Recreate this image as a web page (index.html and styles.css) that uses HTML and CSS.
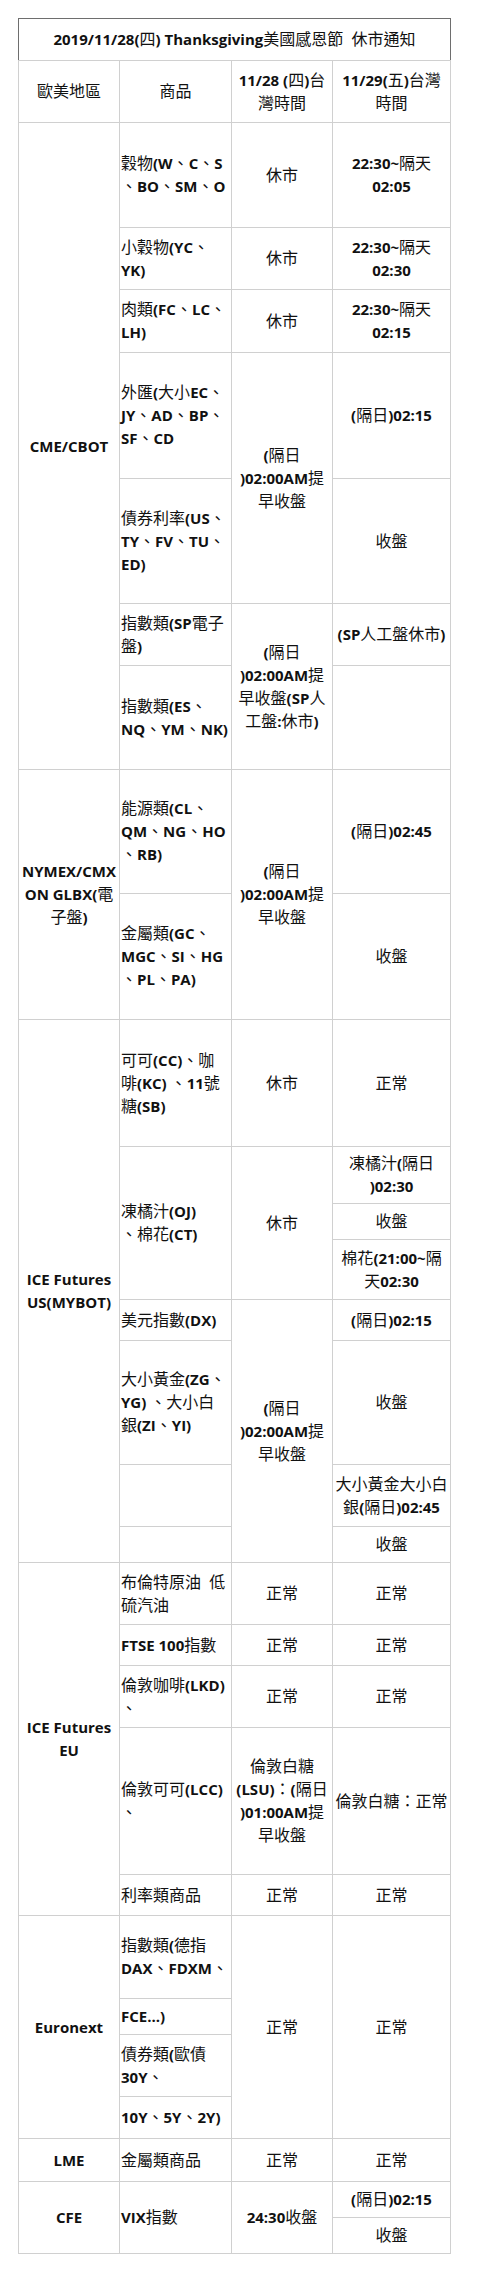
FILE: index.html
```html
<!DOCTYPE html>
<html lang="zh-Hant">
<head>
<meta charset="utf-8">
<title>2019/11/28 Thanksgiving 休市通知</title>
<link rel="stylesheet" href="styles.css">
</head>
<body>
<div class="page">
<table class="notice">
<colgroup><col class="c1"><col class="c2"><col class="c3"><col class="c4"></colgroup>
<tr class="h42"><td colspan="4" class="title"><span class="l">2019/11/28(</span>四<span class="l">) Thanksgiving</span>美國感恩節&nbsp;&nbsp;休市通知</td></tr>
<tr class="h62"><td>歐美地區</td><td>商品</td><td><span class="l">11/28 (</span>四<span class="l">)</span>台<br>灣時間</td><td><span class="l">11/29(</span>五<span class="l">)</span>台灣<br>時間</td></tr>

<tr class="h105"><td rowspan="7" class="l">CME/CBOT</td><td class="prod">穀物<span class="l">(W</span>、<span class="l">C</span>、<span class="l">S</span><br>、<span class="l">BO</span>、<span class="l">SM</span>、<span class="l">O</span></td><td>休市</td><td><span class="l">22:30~</span>隔天<br><span class="l">02:05</span></td></tr>
<tr class="h62"><td class="prod">小穀物<span class="l">(YC</span>、<br><span class="l">YK)</span></td><td>休市</td><td><span class="l">22:30~</span>隔天<br><span class="l">02:30</span></td></tr>
<tr class="h63"><td class="prod">肉類<span class="l">(FC</span>、<span class="l">LC</span>、<br><span class="l">LH)</span></td><td>休市</td><td><span class="l">22:30~</span>隔天<br><span class="l">02:15</span></td></tr>
<tr class="h126"><td class="prod">外匯<span class="l">(</span>大小<span class="l">EC</span>、<br><span class="l">JY</span>、<span class="l">AD</span>、<span class="l">BP</span>、<br><span class="l">SF</span>、<span class="l">CD</span></td><td rowspan="2"><span class="l">(</span>隔日<br><span class="l">)02:00AM</span>提<br>早收盤</td><td><span class="l">(</span>隔日<span class="l">)02:15</span></td></tr>
<tr class="h125"><td class="prod">債券利率<span class="l">(US</span>、<br><span class="l">TY</span>、<span class="l">FV</span>、<span class="l">TU</span>、<br><span class="l">ED)</span></td><td>收盤</td></tr>
<tr class="h62"><td class="prod">指數類<span class="l">(SP</span>電子<br>盤<span class="l">)</span></td><td rowspan="2"><span class="l">(</span>隔日<br><span class="l">)02:00AM</span>提<br>早收盤<span class="l">(SP</span>人<br>工盤<span class="l">:</span>休市<span class="l">)</span></td><td><span class="l">(SP</span>人工盤休市<span class="l">)</span></td></tr>
<tr class="h104"><td class="prod">指數類<span class="l">(ES</span>、<br><span class="l">NQ</span>、<span class="l">YM</span>、<span class="l">NK)</span></td><td></td></tr>

<tr class="h124"><td rowspan="2"><span class="l">NYMEX/CMX<br>ON GLBX(</span>電<br>子盤<span class="l">)</span></td><td class="prod">能源類<span class="l">(CL</span>、<br><span class="l">QM</span>、<span class="l">NG</span>、<span class="l">HO</span><br>、<span class="l">RB)</span></td><td rowspan="2"><span class="l">(</span>隔日<br><span class="l">)02:00AM</span>提<br>早收盤</td><td><span class="l">(</span>隔日<span class="l">)02:45</span></td></tr>
<tr class="h126"><td class="prod">金屬類<span class="l">(GC</span>、<br><span class="l">MGC</span>、<span class="l">SI</span>、<span class="l">HG</span><br>、<span class="l">PL</span>、<span class="l">PA)</span></td><td>收盤</td></tr>

<tr class="h127"><td rowspan="8" class="l">ICE Futures<br>US(MYBOT)</td><td class="prod">可可<span class="l">(CC)</span>、咖<br>啡<span class="l">(KC) </span>、<span class="l">11</span>號<br>糖<span class="l">(SB)</span></td><td>休市</td><td>正常</td></tr>
<tr class="h57"><td rowspan="3" class="prod">凍橘汁<span class="l">(OJ)</span><br>、棉花<span class="l">(CT)</span></td><td rowspan="3">休市</td><td>凍橘汁<span class="l">(</span>隔日<br><span class="l">)02:30</span></td></tr>
<tr class="h36"><td>收盤</td></tr>
<tr class="h60"><td>棉花<span class="l">(21:00~</span>隔<br>天<span class="l">02:30</span></td></tr>
<tr class="h41"><td class="prod">美元指數<span class="l">(DX)</span></td><td rowspan="4"><span class="l">(</span>隔日<br><span class="l">)02:00AM</span>提<br>早收盤</td><td><span class="l">(</span>隔日<span class="l">)02:15</span></td></tr>
<tr class="h124"><td class="prod">大小黃金<span class="l">(ZG</span>、<br><span class="l">YG) </span>、大小白<br>銀<span class="l">(ZI</span>、<span class="l">YI)</span></td><td>收盤</td></tr>
<tr class="h62"><td class="prod"></td><td>大小黃金大小白<br>銀<span class="l">(</span>隔日<span class="l">)02:45</span></td></tr>
<tr class="h36"><td class="prod"></td><td>收盤</td></tr>

<tr class="h62"><td rowspan="5" class="l">ICE Futures<br>EU</td><td class="prod">布倫特原油&nbsp;&nbsp;低<br>硫汽油</td><td>正常</td><td>正常</td></tr>
<tr class="h41"><td class="prod"><span class="l">FTSE 100</span>指數</td><td>正常</td><td>正常</td></tr>
<tr class="h62"><td class="prod">倫敦咖啡<span class="l">(LKD)</span><br>、</td><td>正常</td><td>正常</td></tr>
<tr class="h147"><td class="prod">倫敦可可<span class="l">(LCC)</span><br>、</td><td>倫敦白糖<br><span class="l">(LSU)</span>：<span class="l">(</span>隔日<br><span class="l">)01:00AM</span>提<br>早收盤</td><td>倫敦白糖：正常</td></tr>
<tr class="h41"><td class="prod">利率類商品</td><td>正常</td><td>正常</td></tr>

<tr class="h83"><td rowspan="4" class="l">Euronext</td><td class="prod">指數類<span class="l">(</span>德指<br><span class="l">DAX</span>、<span class="l">FDXM</span>、</td><td rowspan="4">正常</td><td rowspan="4">正常</td></tr>
<tr class="h36"><td class="prod"><span class="l">FCE...)</span></td></tr>
<tr class="h62"><td class="prod">債券類<span class="l">(</span>歐債<br><span class="l">30Y</span>、</td></tr>
<tr class="h42"><td class="prod"><span class="l">10Y</span>、<span class="l">5Y</span>、<span class="l">2Y)</span></td></tr>

<tr class="h43"><td class="l">LME</td><td class="prod">金屬類商品</td><td>正常</td><td>正常</td></tr>
<tr class="h36"><td rowspan="2" class="l">CFE</td><td rowspan="2" class="prod"><span class="l">VIX</span>指數</td><td rowspan="2"><span class="l">24:30</span>收盤</td><td><span class="l">(</span>隔日<span class="l">)02:15</span></td></tr>
<tr class="h36"><td>收盤</td></tr>
</table>
</div>
</body>
</html>
```
FILE: styles.css
```css
body {
  margin: 0;
  background: #ffffff;
}

.page {
  padding: 18px 0 0 18px;
}

.notice {
  border-collapse: collapse;
  table-layout: fixed;
  width: 432px;
  font-family: "Open Sans", "Noto Sans CJK TC", sans-serif;
  font-size: 16px;
  line-height: 23px;
  color: #111111;
}

.c1 { width: 101px; }
.c2 { width: 112px; }
.c3 { width: 101px; }
.c4 { width: 118px; }

.notice td {
  border: 1px solid #d0d0d0;
  text-align: center;
  vertical-align: middle;
  padding: 0 1px;
  white-space: nowrap;
}

.notice td.title {
  border-top-color: #6e6e6e;
  border-left-color: #6e6e6e;
  border-right-color: #6e6e6e;
}

.notice td.prod {
  text-align: left;
  padding-left: 1px;
}

.l {
  font-weight: 700;
  font-size: 15px;
}

.h36 { height: 36px; }
.h41 { height: 41px; }
.h42 { height: 42px; }
.h43 { height: 43px; }
.h57 { height: 57px; }
.h60 { height: 60px; }
.h62 { height: 62px; }
.h63 { height: 63px; }
.h83 { height: 83px; }
.h104 { height: 104px; }
.h105 { height: 105px; }
.h124 { height: 124px; }
.h125 { height: 125px; }
.h126 { height: 126px; }
.h127 { height: 127px; }
.h147 { height: 147px; }
```
